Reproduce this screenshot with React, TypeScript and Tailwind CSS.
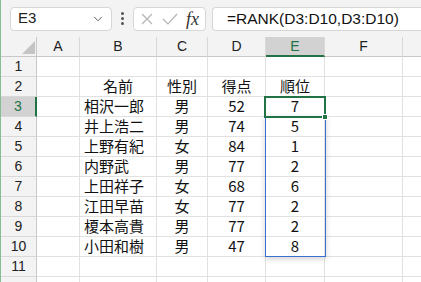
import { ChevronDown } from 'lucide-react'

type Row = {
  name: string
  gender: string
  score: number
  rank: number
}

const rows: Row[] = [
  { name: '相沢一郎', gender: '男', score: 52, rank: 7 },
  { name: '井上浩二', gender: '男', score: 74, rank: 5 },
  { name: '上野有紀', gender: '女', score: 84, rank: 1 },
  { name: '内野武', gender: '男', score: 77, rank: 2 },
  { name: '上田祥子', gender: '女', score: 68, rank: 6 },
  { name: '江田早苗', gender: '女', score: 77, rank: 2 },
  { name: '榎本高貴', gender: '男', score: 77, rank: 2 },
  { name: '小田和樹', gender: '男', score: 47, rank: 8 },
]

// G is only a sliver at the right edge, so its letter is left off
const cols = [
  { key: 'A', label: 'A', w: 'w-[43px]' },
  { key: 'B', label: 'B', w: 'w-[77px]' },
  { key: 'C', label: 'C', w: 'w-[51px]' },
  { key: 'D', label: 'D', w: 'w-[58px]' },
  { key: 'E', label: 'E', w: 'w-[59px]' },
  { key: 'F', label: 'F', w: 'w-[78px]' },
  { key: 'G', label: '', w: 'w-[60px]' },
]

const cellFont = { fontFamily: '"Noto Sans CJK JP", "Liberation Sans", sans-serif' }
const uiFont = { fontFamily: '"Liberation Sans", Arial, sans-serif' }

function RowHeader({ n, active }: { n: number | null; active?: boolean }) {
  return (
    <div
      className={
        'w-[36px] h-[20px] flex-shrink-0 flex items-center justify-center text-[14px] border-b border-[#d8d8d8] ' +
        (active
          ? 'bg-[#d2d2d2] text-[#217346] border-r-2 border-r-[#217346]'
          : 'bg-[#f3f3f3] text-[#222] border-r border-r-[#c8c8c8]')
      }
      style={uiFont}
    >
      {n}
    </div>
  )
}

function Cell({ w, align = 'center', children }: { w: string; align?: string; children?: React.ReactNode }) {
  const justify = align === 'left' ? 'justify-start pl-[4px]' : 'justify-center'
  return (
    <div
      className={`${w} h-[20px] flex-shrink-0 flex items-end pb-[1px] ${justify} border-r border-b border-[#e1e1e1] text-[15px] leading-[18px] text-[#111]`}
      style={cellFont}
    >
      {children}
    </div>
  )
}

export default function App() {
  const empty = [null, null, null, null, null, null, null]
  const lines: { n: number | null; cells: (string | number | null)[] }[] = [
    { n: 1, cells: empty },
    { n: 2, cells: [null, '名前', '性別', '得点', '順位', null, null] },
    ...rows.map((r, i) => ({
      n: i + 3,
      cells: [null, r.name, r.gender, r.score, r.rank, null, null],
    })),
    { n: 11, cells: empty },
    { n: null, cells: empty },
  ]

  return (
    <div className="w-[421px] h-[282px] overflow-hidden bg-white border-l border-[#86bd97] relative">
      {/* name box + formula bar */}
      <div className="h-[37px] bg-[#f3f3f3] flex items-center pl-[9px]">
        <div className="w-[102px] h-[24px] bg-white border border-[#d6d6d6] rounded-[4px] flex items-center justify-between pl-[7px] pr-[6px]">
          <span className="text-[15px] text-[#222]" style={uiFont}>E3</span>
          <ChevronDown size={14} strokeWidth={1.5} className="text-[#444]" />
        </div>
        <div className="w-[21px] flex flex-col items-center gap-[2px]">
          <span className="w-[3px] h-[3px] bg-[#555] rounded-full" />
          <span className="w-[3px] h-[3px] bg-[#555] rounded-full" />
          <span className="w-[3px] h-[3px] bg-[#555] rounded-full" />
        </div>
        <div className="w-[73px] h-[24px] bg-white border border-[#d6d6d6] rounded-[4px] flex items-center pl-[6px]">
          <svg width="14" height="14" viewBox="0 0 14 14" className="mr-[8px]">
            <path d="M2 2 L12 12 M12 2 L2 12" stroke="#b4b4b4" strokeWidth="1.2" fill="none" />
          </svg>
          <svg width="16" height="14" viewBox="0 0 16 14" className="mr-[8px]">
            <path d="M1 7 L6 12 L15 2" stroke="#b4b4b4" strokeWidth="1.2" fill="none" />
          </svg>
          <span className="text-[18px] italic text-[#333] leading-none" style={{ fontFamily: '"Liberation Serif", serif' }}>fx</span>
        </div>
        <div className="ml-[6px] flex-1 h-[24px] bg-white border border-[#d6d6d6] rounded-l-[4px] border-r-0 flex items-center pl-[14px]">
          <span className="text-[15.5px] text-[#111]" style={uiFont}>=RANK(D3:D10,D3:D10)</span>
        </div>
      </div>

      {/* sheet */}
      <div className="relative">
        <div className="flex h-[20px]">
          <div className="w-[36px] h-[20px] flex-shrink-0 bg-[#f3f3f3] border-r border-b border-[#c8c8c8] relative">
            <svg width="14" height="13" viewBox="0 0 14 13" className="absolute left-[21px] top-[4px]">
              <polygon points="13,0 13,13 0,13" fill="#c4c4c4" />
            </svg>
          </div>
          {cols.map((c) => (
            <div
              key={c.key}
              className={
                `${c.w} h-[20px] flex-shrink-0 flex items-center justify-center text-[14px] border-r border-r-[#d8d8d8] ` +
                (c.key === 'E'
                  ? 'bg-[#d2d2d2] text-[#217346] border-b-2 border-b-[#217346]'
                  : 'bg-[#f3f3f3] text-[#222] border-b border-b-[#c8c8c8]')
              }
              style={uiFont}
            >
              {c.label}
            </div>
          ))}
        </div>

        {lines.map((line, li) => (
          <div key={li} className="flex">
            <RowHeader n={line.n} active={line.n === 3} />
            {cols.map((c, ci) => (
              <Cell key={c.key} w={c.w} align={ci === 1 && li >= 2 ? 'left' : 'center'}>
                {line.cells[ci]}
              </Cell>
            ))}
          </div>
        ))}

        {/* range highlight E4:E10 */}
        <div className="absolute left-[264px] top-[79px] w-[61px] h-[141px] border border-[#3b6fd0] shadow-[0_2px_6px_rgba(0,0,0,0.18)] pointer-events-none" />
        {/* active cell E3 */}
        <div className="absolute left-[263px] top-[59px] w-[62px] h-[22px] border-2 border-[#217346] pointer-events-none" />
        <div className="absolute left-[321px] top-[77px] w-[6px] h-[6px] bg-[#217346] border border-white pointer-events-none" />
      </div>
    </div>
  )
}
